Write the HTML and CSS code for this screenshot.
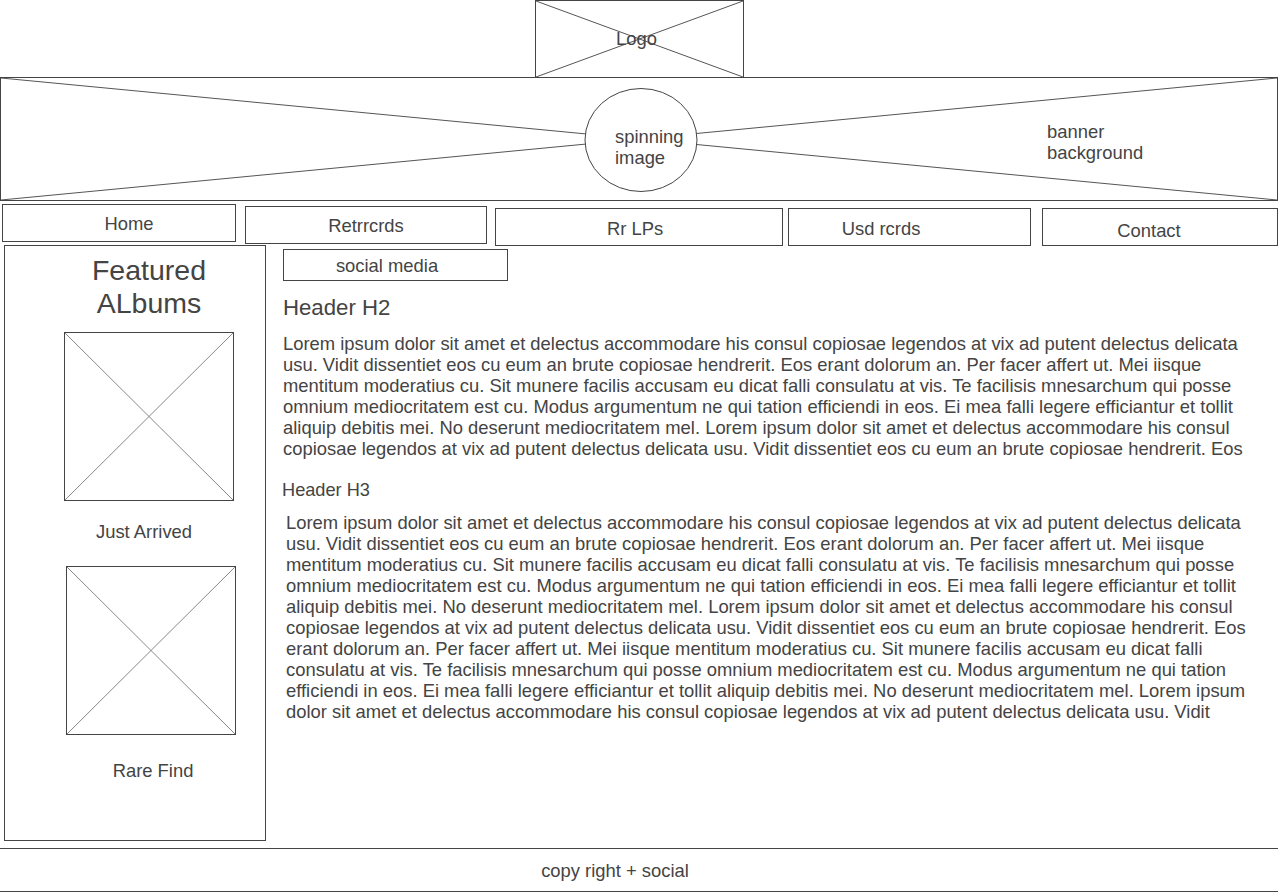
FILE: index.html
```html
<!DOCTYPE html>
<html>
<head>
<meta charset="utf-8">
<link rel="stylesheet" href="styles.css">
</head>
<body>
<div class="page">
  <header class="top">
    <div class="logo">
      <svg class="xlines" viewBox="0 0 100 100" preserveAspectRatio="none"><line x1="0" y1="0" x2="100" y2="100"/><line x1="100" y1="0" x2="0" y2="100"/></svg>
      <span class="logo-text">Logo</span>
    </div>
  </header>
  <section class="banner">
    <svg class="banner-art" viewBox="0 0 1276 122" preserveAspectRatio="none">
      <line x1="0" y1="0" x2="1276" y2="122"/>
      <line x1="1276" y1="0" x2="0" y2="122"/>
      <ellipse cx="640" cy="62" rx="56" ry="51.5" fill="#fff"/>
    </svg>
    <span class="spin-text">spinning<br>image</span>
    <span class="bg-text">banner<br>background</span>
  </section>
  <nav class="nav">
    <a class="nav-item home">Home</a>
    <a class="nav-item retro">Retrrcrds</a>
    <a class="nav-item lps">Rr LPs</a>
    <a class="nav-item used">Usd rcrds</a>
    <a class="nav-item contact">Contact</a>
  </nav>
  <main class="main">
    <aside class="sidebar">
      <h1 class="side-title">Featured<br>ALbums</h1>
      <div class="ph ph-one">
        <svg class="xlines light" viewBox="0 0 100 100" preserveAspectRatio="none"><line x1="0" y1="0" x2="100" y2="100"/><line x1="100" y1="0" x2="0" y2="100"/></svg>
      </div>
      <p class="side-label just">Just Arrived</p>
      <div class="ph ph-two">
        <svg class="xlines light" viewBox="0 0 100 100" preserveAspectRatio="none"><line x1="0" y1="0" x2="100" y2="100"/><line x1="100" y1="0" x2="0" y2="100"/></svg>
      </div>
      <p class="side-label rare">Rare Find</p>
    </aside>
    <section class="content">
      <div class="social">social media</div>
      <h2 class="h2">Header H2</h2>
      <p class="para p1">Lorem ipsum dolor sit amet et delectus accommodare his consul copiosae legendos at vix ad putent delectus delicata usu. Vidit dissentiet eos cu eum an brute copiosae hendrerit. Eos erant dolorum an. Per facer affert ut. Mei iisque mentitum moderatius cu. Sit munere facilis accusam eu dicat falli consulatu at vis. Te facilisis mnesarchum qui posse omnium mediocritatem est cu. Modus argumentum ne qui tation efficiendi in eos. Ei mea falli legere efficiantur et tollit aliquip debitis mei. No deserunt mediocritatem mel. Lorem ipsum dolor sit amet et delectus accommodare his consul copiosae legendos at vix ad putent delectus delicata usu. Vidit dissentiet eos cu eum an brute copiosae hendrerit. Eos</p>
      <h3 class="h3">Header H3</h3>
      <p class="para p2">Lorem ipsum dolor sit amet et delectus accommodare his consul copiosae legendos at vix ad putent delectus delicata usu. Vidit dissentiet eos cu eum an brute copiosae hendrerit. Eos erant dolorum an. Per facer affert ut. Mei iisque mentitum moderatius cu. Sit munere facilis accusam eu dicat falli consulatu at vis. Te facilisis mnesarchum qui posse omnium mediocritatem est cu. Modus argumentum ne qui tation efficiendi in eos. Ei mea falli legere efficiantur et tollit aliquip debitis mei. No deserunt mediocritatem mel. Lorem ipsum dolor sit amet et delectus accommodare his consul copiosae legendos at vix ad putent delectus delicata usu. Vidit dissentiet eos cu eum an brute copiosae hendrerit. Eos erant dolorum an. Per facer affert ut. Mei iisque mentitum moderatius cu. Sit munere facilis accusam eu dicat falli consulatu at vis. Te facilisis mnesarchum qui posse omnium mediocritatem est cu. Modus argumentum ne qui tation efficiendi in eos. Ei mea falli legere efficiantur et tollit aliquip debitis mei. No deserunt mediocritatem mel. Lorem ipsum dolor sit amet et delectus accommodare his consul copiosae legendos at vix ad putent delectus delicata usu. Vidit</p>
    </section>
  </main>
  <footer class="footer">copy right + social</footer>
</div>
</body>
</html>
```

FILE: styles.css
```css
* { box-sizing: border-box; }
html, body {
  margin: 0;
  padding: 0;
  background: #fff;
}
body {
  font-family: "Liberation Sans", Arial, Helvetica, sans-serif;
  color: #444;
  font-size: 18.4px;
  line-height: 21px;
}
.page {
  width: 1278px;
  height: 892px;
  overflow: hidden;
  display: flex;
  flex-direction: column;
}

/* header / logo */
.top {
  height: 77px;
  display: flex;
  justify-content: center;
}
.logo {
  position: relative;
  width: 209px;
  height: 77px;
  margin-left: 1px;
  border: 1px solid #444;
  border-bottom: none;
  display: flex;
  align-items: center;
  justify-content: center;
}
.logo-text {
  position: relative;
  margin-left: -6px;
  margin-top: -2px;
}
.xlines {
  position: absolute;
  inset: 0;
  width: 100%;
  height: 100%;
}
.xlines line {
  stroke: #555;
  stroke-width: 1;
  vector-effect: non-scaling-stroke;
}
.xlines.light line { stroke: #888; }

/* banner */
.banner {
  position: relative;
  height: 124px;
  border: 1px solid #444;
}
.banner-art {
  position: absolute;
  inset: 0;
  width: 100%;
  height: 100%;
}
.banner-art line {
  stroke: #555;
  stroke-width: 1;
  vector-effect: non-scaling-stroke;
}
.banner-art ellipse {
  stroke: #444;
  stroke-width: 1;
  vector-effect: non-scaling-stroke;
}
.spin-text {
  position: absolute;
  left: 614px;
  top: 48px;
}
.bg-text {
  position: absolute;
  left: 1046px;
  top: 43px;
}

/* nav */
.nav {
  height: 44px;
  display: flex;
  align-items: flex-start;
}
.nav-item {
  display: flex;
  align-items: center;
  justify-content: center;
  height: 38px;
  border: 1px solid #444;
  color: #444;
  text-decoration: none;
}
.home { width: 234px; margin: 3px 0 0 2px; padding-left: 20px; }
.retro { width: 242px; margin: 5px 0 0 9px; }
.lps { width: 288px; margin: 7px 0 0 8px; padding-right: 8px; padding-top: 2px; }
.used { width: 243px; margin: 7px 0 0 5px; padding-right: 57px; padding-top: 2px; }
.contact { width: 236px; margin: 7px 0 0 11px; padding-right: 22px; padding-top: 6px; }

/* main */
.main {
  height: 603px;
  display: flex;
  align-items: flex-start;
}
.sidebar {
  width: 262px;
  height: 596px;
  margin-left: 4px;
  border: 1px solid #444;
  display: flex;
  flex-direction: column;
  align-items: flex-start;
}
.side-title {
  margin: 8px 0 0 0;
  width: 100%;
  padding-left: 28px;
  text-align: center;
  font-weight: normal;
  font-size: 28.5px;
  line-height: 33px;
}
.ph {
  position: relative;
  width: 170px;
  height: 169px;
  border: 1px solid #444;
}
.ph-one { margin: 12px 0 0 59px; }
.ph-two { margin: 24px 0 0 61px; }
.side-label {
  margin: 0;
  width: 100%;
  text-align: center;
}
.just { margin-top: 20px; padding-left: 18px; }
.rare { margin-top: 25px; padding-left: 36px; }

.content {
  flex: 1;
  padding-left: 17px;
  padding-top: 4px;
}
.social {
  width: 225px;
  height: 32px;
  border: 1px solid #444;
  display: flex;
  align-items: center;
  justify-content: center;
  padding-right: 17px;
}
.h2 {
  margin: 14px 0 0 0;
  font-weight: normal;
  font-size: 22.2px;
  line-height: 26px;
}
.para {
  margin: 0;
  width: 980px;
}
.p1 { margin-top: 12px; }
.h3 {
  margin: 21px 0 0 -1px;
  font-weight: normal;
  font-size: 18.2px;
  line-height: 21px;
}
.p2 { margin: 11px 0 0 3px; }

/* footer */
.footer {
  margin-top: auto;
  height: 44px;
  border-top: 1px solid #444;
  border-bottom: 1px solid #444;
  display: flex;
  align-items: center;
  justify-content: center;
  padding-right: 48px;
}
```
